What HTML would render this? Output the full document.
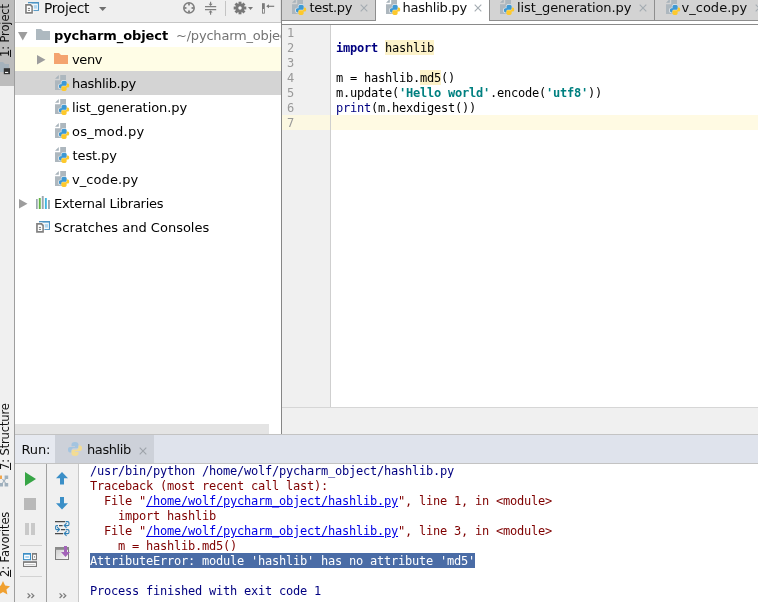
<!DOCTYPE html>
<html>
<head>
<meta charset="utf-8">
<title>pycharm_object - hashlib.py</title>
<style>
html,body{margin:0;padding:0;}
body{width:758px;height:602px;overflow:hidden;background:#fff;position:relative;font-family:"DejaVu Sans","Liberation Sans",sans-serif;font-size:13px;color:#000;}
#root{position:absolute;left:0;top:0;width:758px;height:602px;overflow:hidden;will-change:transform;}
.abs{position:absolute;}
svg{display:block;overflow:visible;}
.ui{font-family:"DejaVu Sans","Liberation Sans",sans-serif;font-size:13px;line-height:15px;white-space:nowrap;color:#0c0c0c;position:absolute;}
.mono{font-family:"DejaVu Sans Mono","Liberation Mono",monospace;font-size:12px;letter-spacing:-0.224px;white-space:pre;}
#stripe{left:0;top:0;width:14px;height:602px;background:#f0f0f0;border-right:1px solid #9e9e9e;}
#stripeSel{left:0;top:0;width:14px;height:86px;background:#bcbcbc;}
.vtext{position:absolute;transform-origin:0 0;transform:rotate(-90deg);white-space:nowrap;font-size:11.5px;line-height:13px;color:#111;letter-spacing:-0.13px;}
#projHead{left:15px;top:0;width:266px;height:22px;background:#efefef;border-bottom:1px solid #c6c6c6;}
#projTree{left:15px;top:23px;width:266px;height:411px;background:#fff;overflow:hidden;}
.row{position:absolute;left:0;width:266px;height:24px;}
.t{position:absolute;height:24px;line-height:26px;white-space:nowrap;font-size:13px;color:#000;}
#tabbar{left:282px;top:0;width:476px;height:20px;background:#d3d3d3;}
.tabsep{position:absolute;top:0;width:1px;height:20px;background:#8e8e8e;}
#gutter{left:282px;top:25px;width:48px;height:382px;background:#f0f0f0;border-right:1px solid #cfcfcf;}
.ln{position:absolute;left:287px;color:#999;height:14px;padding-top:1px;line-height:15px;}
.cl{position:absolute;left:336px;height:14px;padding-top:1px;line-height:15px;color:#000;}
.kw{color:#000080;font-weight:bold;}
.str{color:#008080;font-weight:bold;}
.bi{color:#000080;}
.hl{background:#fcf2c9;padding-top:1px;}
#runHead{left:15px;top:434px;width:743px;height:28px;background:#dfe3ec;border-top:1px solid #c3c3c3;border-bottom:1px solid #c3c3c3;}
.con{position:absolute;left:90px;height:14px;padding-top:1px;line-height:15px;}
.err{color:#7f0000;}
.out{color:#000080;}
.lnk{color:#0000e6;text-decoration:underline;}
</style>
</head>
<body>
<div id="root">

<div class="abs" id="stripe"></div><div class="abs" id="stripeSel"></div>
<div class="vtext" style="left:-1px;top:57px;"><u>1</u>: Project</div>
<div class="vtext" style="left:-1px;top:470px;"><u>7</u>: Structure</div>
<div class="vtext" style="left:-1px;top:577px;"><u>2</u>: Favorites</div>
<svg class="abs" style="left:0;top:61px" width="14" height="16" viewBox="0 0 14 16"><path d="M0 1 H3 L5 3 H9 V11 H0 Z" fill="#a5b2bc"/><rect x="3.8" y="7.2" width="6.2" height="6" fill="#333"/><rect x="5" y="10.9" width="3.2" height="1.1" fill="#f4f4f4"/></svg>
<svg class="abs" style="left:0;top:475px" width="9" height="12" viewBox="0 0 9 12"><rect x="0" y="0.5" width="2" height="3.5" fill="#f0a64e"/><rect x="4.6" y="0.5" width="3.6" height="3.5" fill="#9fb0bd"/><rect x="0" y="8" width="3" height="3.5" fill="#9fb0bd"/><rect x="4.6" y="8" width="3.6" height="3.5" fill="#9fb0bd"/><path d="M2.5 4 L5.5 8 M5.5 4 L2.5 8" stroke="#9fb0bd" stroke-width="1.2"/></svg>
<svg class="abs" style="left:-4px;top:581px" width="14" height="14" viewBox="0 0 14 14"><path d="M7 0 L9.1 4.6 L14 5.2 L10.4 8.6 L11.4 13.6 L7 11.1 L2.6 13.6 L3.6 8.6 L0 5.2 L4.9 4.6 Z" fill="#f0a030"/></svg>
<div class="abs" id="projHead"></div>
<div class="abs" style="left:15px;top:0;width:1px;height:22px;background:#fafafa"></div>
<svg class="abs" style="left:25px;top:2px" width="15" height="13" viewBox="0 0 15 13">
<rect x="3" y="0" width="11" height="8.9" fill="#4d94c4"/>
<rect x="3.6" y="1.6" width="9.3" height="6.4" fill="#f3f8fc"/>
<rect x="8.6" y="3.1" width="3.4" height="3.5" fill="#b0d7f1"/>
<path d="M-0.6 1.3 H6.2 L8.6 3.7 V12.5 H-0.6 Z" fill="#fff" opacity="0.75"/>
<path d="M0.1 2 H5.9 L7.9 4 V11.85 H0.1 Z" fill="#828282"/>
<path d="M1.8 3.8 H5.1 L6.3 5 V10.1 H1.8 Z" fill="#fff"/>
<rect x="2.9" y="5.9" width="2.1" height="0.9" fill="#6a6a6a"/><rect x="2.9" y="7.9" width="2.1" height="0.9" fill="#6a6a6a"/>
</svg>
<div class="ui" style="left:44px;top:1px;font-size:13.8px;letter-spacing:-0.3px">Project</div>
<svg class="abs" style="left:99px;top:7px" width="8" height="4" viewBox="0 0 8 4"><path d="M0 0 H7.4 L3.7 4 Z" fill="#6f6f6f"/></svg>
<svg class="abs" style="left:182px;top:1px" width="14" height="14" viewBox="0 0 14 14"><circle cx="7" cy="6.9" r="5.2" fill="none" stroke="#7c7c7c" stroke-width="1.5"/><path d="M5.5 2.2 H8.5 L7 5.2 Z M5.5 11.6 H8.5 L7 8.6 Z M2.3 5.4 V8.4 L5.3 6.9 Z M11.7 5.4 V8.4 L8.7 6.9 Z" fill="#7c7c7c"/></svg>
<svg class="abs" style="left:205px;top:1px" width="12" height="14" viewBox="0 0 12 14"><path d="M0 5.6 H11.2 M0 8.6 H11.2" stroke="#808080" stroke-width="1.05" fill="none"/><path d="M5.6 0.8 V3.5 M5.6 13.8 V11" stroke="#7c7c7c" stroke-width="1.1"/><path d="M3.6 2.8 H7.6 L5.6 5.1 Z M3.6 11.6 H7.6 L5.6 9.3 Z" fill="#7c7c7c"/></svg>
<div class="abs" style="left:225px;top:1px;width:1px;height:15px;background:#c4c4c4"></div>
<svg class="abs" style="left:233px;top:1px" width="14" height="14" viewBox="-7 -7 14 14"><rect x="-1.45" y="-6.3" width="2.9" height="3.2" fill="#787878" transform="rotate(0)"/><rect x="-1.45" y="-6.3" width="2.9" height="3.2" fill="#787878" transform="rotate(45)"/><rect x="-1.45" y="-6.3" width="2.9" height="3.2" fill="#787878" transform="rotate(90)"/><rect x="-1.45" y="-6.3" width="2.9" height="3.2" fill="#787878" transform="rotate(135)"/><rect x="-1.45" y="-6.3" width="2.9" height="3.2" fill="#787878" transform="rotate(180)"/><rect x="-1.45" y="-6.3" width="2.9" height="3.2" fill="#787878" transform="rotate(225)"/><rect x="-1.45" y="-6.3" width="2.9" height="3.2" fill="#787878" transform="rotate(270)"/><rect x="-1.45" y="-6.3" width="2.9" height="3.2" fill="#787878" transform="rotate(315)"/><circle r="4.5" fill="#787878"/><circle r="1.75" fill="#f6f6f6"/></svg>
<svg class="abs" style="left:248px;top:7px" width="5" height="3" viewBox="0 0 5 3"><path d="M0 0.1 H5 L2.5 2.9 Z" fill="#787878"/></svg>
<svg class="abs" style="left:262px;top:3px" width="13" height="11" viewBox="0 0 13 11"><rect x="0" y="0.2" width="2.8" height="10.4" fill="#7b7b7b"/><rect x="0.9" y="6" width="1" height="3.7" fill="#fafafa"/><path d="M5 3.3 H12.2" stroke="#7b7b7b" stroke-width="1.2"/><path d="M4.2 3.3 L7 1.3 V5.3 Z" fill="#7b7b7b"/></svg>
<div class="abs" id="projTree">
<div class="row" style="top:24px;background:#fffde6;"></div>
<div class="row" style="top:48px;background:#d4d4d4;"></div>
<div class="abs" style="left:0;top:401px;width:254px;height:10px;background:#e4e4e4"></div>
</div>
<div class="t" style="left:54px;top:23px;font-weight:bold;letter-spacing:-0.1px">pycharm_object</div>
<div class="t" style="left:72px;top:47px;letter-spacing:-0.37px">venv</div>
<div class="t" style="left:72px;top:71px;letter-spacing:-0.3px">hashlib.py</div>
<div class="t" style="left:72px;top:95px;letter-spacing:-0.07px">list_generation.py</div>
<div class="t" style="left:72px;top:119px;letter-spacing:0.24px">os_mod.py</div>
<div class="t" style="left:72.5px;top:143px;letter-spacing:-0.1px">test.py</div>
<div class="t" style="left:72px;top:167px;letter-spacing:0.08px">v_code.py</div>
<div class="t" style="left:54px;top:191px;letter-spacing:-0.28px">External Libraries</div>
<div class="t" style="left:54px;top:215px;letter-spacing:0.01px">Scratches and Consoles</div>
<div class="abs" style="left:176px;top:23px;width:105px;height:24px;overflow:hidden"><div class="t" style="left:0;top:0;color:#747474;letter-spacing:-0.2px">~/pycharm_object</div></div>
<svg class="abs" style="left:18px;top:32px" width="10" height="9" viewBox="0 0 10 9"><path d="M0 0 H9.5 L4.75 8.5 Z" fill="#9d9d9d"/></svg>
<svg class="abs" style="left:36px;top:29px" width="14" height="11" viewBox="0 0 14 11"><path d="M0 0 H5 L7 2 H14 V11 H0 Z" fill="#aeb9c0"/></svg>
<svg class="abs" style="left:37px;top:55px" width="9" height="10" viewBox="0 0 9 10"><path d="M0 0 L8.5 4.75 L0 9.5 Z" fill="#9d9d9d"/></svg>
<svg class="abs" style="left:54px;top:53px" width="14" height="11" viewBox="0 0 14 11"><path d="M0 0 H5 L7 2 H14 V11 H0 Z" fill="#f4a46f"/></svg>
<svg class="abs" style="left:55px;top:75px" width="16" height="17" viewBox="0 0 16 17">
<path d="M5.2 0 H11 V14.9 H0 V5.2 H5.2 Z" fill="#adb7be"/>
<path d="M0 3.8 L3.8 0 V3.8 Z" fill="#a7b2ba"/>
<g transform="translate(3.9,5.8) scale(1.03)">
<path d="M5 -0.7 C2.8 -0.7 1.9 0.2 1.9 1.6 V2.9 H1.2 C-0.3 2.9 -0.7 4.2 -0.7 5.5 C-0.7 7 0 8.1 1.5 8.1 H3 V6 H7.5 V1.6 C7.5 0.2 7 -0.7 5 -0.7 Z" fill="#fff" opacity="0.75"/>
<path d="M5 0 C3.2 0 2.5 .7 2.5 1.8 V3.4 H1.4 C.4 3.4 0 4.3 0 5.4 C0 6.6 .5 7.4 1.4 7.4 H2.6 V6.2 C2.6 5.3 3.2 4.8 4 4.8 H6.4 C7.1 4.8 7.6 4.3 7.6 3.6 V1.8 C7.6 .7 6.8 0 5 0 Z" fill="#3d98d3"/>
<path d="M5 10 C6.8 10 7.5 9.3 7.5 8.2 V6.6 H8.6 C9.6 6.6 10 5.7 10 4.6 C10 3.4 9.5 2.6 8.6 2.6 H7.6 V3.8 C7.6 4.7 7 5.3 6.2 5.3 H3.6 C2.9 5.3 2.4 5.7 2.4 6.4 V8.2 C2.4 9.3 3.2 10 5 10 Z" fill="#fdc92c"/>
</g></svg>
<svg class="abs" style="left:55px;top:99px" width="16" height="17" viewBox="0 0 16 17">
<path d="M5.2 0 H11 V14.9 H0 V5.2 H5.2 Z" fill="#adb7be"/>
<path d="M0 3.8 L3.8 0 V3.8 Z" fill="#a7b2ba"/>
<g transform="translate(3.9,5.8) scale(1.03)">
<path d="M5 -0.7 C2.8 -0.7 1.9 0.2 1.9 1.6 V2.9 H1.2 C-0.3 2.9 -0.7 4.2 -0.7 5.5 C-0.7 7 0 8.1 1.5 8.1 H3 V6 H7.5 V1.6 C7.5 0.2 7 -0.7 5 -0.7 Z" fill="#fff" opacity="0.75"/>
<path d="M5 0 C3.2 0 2.5 .7 2.5 1.8 V3.4 H1.4 C.4 3.4 0 4.3 0 5.4 C0 6.6 .5 7.4 1.4 7.4 H2.6 V6.2 C2.6 5.3 3.2 4.8 4 4.8 H6.4 C7.1 4.8 7.6 4.3 7.6 3.6 V1.8 C7.6 .7 6.8 0 5 0 Z" fill="#3d98d3"/>
<path d="M5 10 C6.8 10 7.5 9.3 7.5 8.2 V6.6 H8.6 C9.6 6.6 10 5.7 10 4.6 C10 3.4 9.5 2.6 8.6 2.6 H7.6 V3.8 C7.6 4.7 7 5.3 6.2 5.3 H3.6 C2.9 5.3 2.4 5.7 2.4 6.4 V8.2 C2.4 9.3 3.2 10 5 10 Z" fill="#fdc92c"/>
</g></svg>
<svg class="abs" style="left:55px;top:123px" width="16" height="17" viewBox="0 0 16 17">
<path d="M5.2 0 H11 V14.9 H0 V5.2 H5.2 Z" fill="#adb7be"/>
<path d="M0 3.8 L3.8 0 V3.8 Z" fill="#a7b2ba"/>
<g transform="translate(3.9,5.8) scale(1.03)">
<path d="M5 -0.7 C2.8 -0.7 1.9 0.2 1.9 1.6 V2.9 H1.2 C-0.3 2.9 -0.7 4.2 -0.7 5.5 C-0.7 7 0 8.1 1.5 8.1 H3 V6 H7.5 V1.6 C7.5 0.2 7 -0.7 5 -0.7 Z" fill="#fff" opacity="0.75"/>
<path d="M5 0 C3.2 0 2.5 .7 2.5 1.8 V3.4 H1.4 C.4 3.4 0 4.3 0 5.4 C0 6.6 .5 7.4 1.4 7.4 H2.6 V6.2 C2.6 5.3 3.2 4.8 4 4.8 H6.4 C7.1 4.8 7.6 4.3 7.6 3.6 V1.8 C7.6 .7 6.8 0 5 0 Z" fill="#3d98d3"/>
<path d="M5 10 C6.8 10 7.5 9.3 7.5 8.2 V6.6 H8.6 C9.6 6.6 10 5.7 10 4.6 C10 3.4 9.5 2.6 8.6 2.6 H7.6 V3.8 C7.6 4.7 7 5.3 6.2 5.3 H3.6 C2.9 5.3 2.4 5.7 2.4 6.4 V8.2 C2.4 9.3 3.2 10 5 10 Z" fill="#fdc92c"/>
</g></svg>
<svg class="abs" style="left:55px;top:147px" width="16" height="17" viewBox="0 0 16 17">
<path d="M5.2 0 H11 V14.9 H0 V5.2 H5.2 Z" fill="#adb7be"/>
<path d="M0 3.8 L3.8 0 V3.8 Z" fill="#a7b2ba"/>
<g transform="translate(3.9,5.8) scale(1.03)">
<path d="M5 -0.7 C2.8 -0.7 1.9 0.2 1.9 1.6 V2.9 H1.2 C-0.3 2.9 -0.7 4.2 -0.7 5.5 C-0.7 7 0 8.1 1.5 8.1 H3 V6 H7.5 V1.6 C7.5 0.2 7 -0.7 5 -0.7 Z" fill="#fff" opacity="0.75"/>
<path d="M5 0 C3.2 0 2.5 .7 2.5 1.8 V3.4 H1.4 C.4 3.4 0 4.3 0 5.4 C0 6.6 .5 7.4 1.4 7.4 H2.6 V6.2 C2.6 5.3 3.2 4.8 4 4.8 H6.4 C7.1 4.8 7.6 4.3 7.6 3.6 V1.8 C7.6 .7 6.8 0 5 0 Z" fill="#3d98d3"/>
<path d="M5 10 C6.8 10 7.5 9.3 7.5 8.2 V6.6 H8.6 C9.6 6.6 10 5.7 10 4.6 C10 3.4 9.5 2.6 8.6 2.6 H7.6 V3.8 C7.6 4.7 7 5.3 6.2 5.3 H3.6 C2.9 5.3 2.4 5.7 2.4 6.4 V8.2 C2.4 9.3 3.2 10 5 10 Z" fill="#fdc92c"/>
</g></svg>
<svg class="abs" style="left:55px;top:171px" width="16" height="17" viewBox="0 0 16 17">
<path d="M5.2 0 H11 V14.9 H0 V5.2 H5.2 Z" fill="#adb7be"/>
<path d="M0 3.8 L3.8 0 V3.8 Z" fill="#a7b2ba"/>
<g transform="translate(3.9,5.8) scale(1.03)">
<path d="M5 -0.7 C2.8 -0.7 1.9 0.2 1.9 1.6 V2.9 H1.2 C-0.3 2.9 -0.7 4.2 -0.7 5.5 C-0.7 7 0 8.1 1.5 8.1 H3 V6 H7.5 V1.6 C7.5 0.2 7 -0.7 5 -0.7 Z" fill="#fff" opacity="0.75"/>
<path d="M5 0 C3.2 0 2.5 .7 2.5 1.8 V3.4 H1.4 C.4 3.4 0 4.3 0 5.4 C0 6.6 .5 7.4 1.4 7.4 H2.6 V6.2 C2.6 5.3 3.2 4.8 4 4.8 H6.4 C7.1 4.8 7.6 4.3 7.6 3.6 V1.8 C7.6 .7 6.8 0 5 0 Z" fill="#3d98d3"/>
<path d="M5 10 C6.8 10 7.5 9.3 7.5 8.2 V6.6 H8.6 C9.6 6.6 10 5.7 10 4.6 C10 3.4 9.5 2.6 8.6 2.6 H7.6 V3.8 C7.6 4.7 7 5.3 6.2 5.3 H3.6 C2.9 5.3 2.4 5.7 2.4 6.4 V8.2 C2.4 9.3 3.2 10 5 10 Z" fill="#fdc92c"/>
</g></svg>
<svg class="abs" style="left:19px;top:199px" width="9" height="10" viewBox="0 0 9 10"><path d="M0 0 L8.5 4.75 L0 9.5 Z" fill="#9d9d9d"/></svg>
<svg class="abs" style="left:36px;top:196px" width="15" height="13" viewBox="0 0 15 13"><rect x="0" y="3" width="1.7" height="10" fill="#9aa7b0"/><rect x="2.8" y="2" width="1.9" height="11" fill="#62b543"/><rect x="5.8" y="0" width="1.9" height="13" fill="#9aa7b0"/><rect x="8.9" y="2" width="1.9" height="11" fill="#40b6e0"/><rect x="12" y="4" width="1.9" height="9" fill="#9aa7b0"/></svg>
<svg class="abs" style="left:36px;top:221px" width="15" height="13" viewBox="0 0 15 13">
<rect x="3" y="0" width="11" height="8.9" fill="#4d94c4"/>
<rect x="3.6" y="1.6" width="9.3" height="6.4" fill="#f3f8fc"/>
<rect x="8.6" y="3.1" width="3.4" height="3.5" fill="#b0d7f1"/>
<path d="M-0.6 1.3 H6.2 L8.6 3.7 V12.5 H-0.6 Z" fill="#fff" opacity="0.75"/>
<path d="M0.1 2 H5.9 L7.9 4 V11.85 H0.1 Z" fill="#828282"/>
<path d="M1.8 3.8 H5.1 L6.3 5 V10.1 H1.8 Z" fill="#fff"/>
<rect x="2.9" y="5.9" width="2.1" height="0.9" fill="#6a6a6a"/><rect x="2.9" y="7.9" width="2.1" height="0.9" fill="#6a6a6a"/>
</svg>
<div class="abs" style="left:280px;top:0;width:1px;height:22px;background:#e2e2e2"></div>
<div class="abs" style="left:281px;top:0;width:1px;height:434px;background:#868686"></div>
<div class="abs" id="tabbar"></div>
<div class="abs" style="left:376px;top:0;width:113px;height:21px;background:#fff"></div>
<div class="abs" style="left:282px;top:21px;width:476px;height:3px;background:#fff"></div>
<div class="abs" style="left:282px;top:20px;width:94px;height:1px;background:#8e8e8e"></div>
<div class="abs" style="left:489px;top:20px;width:269px;height:1px;background:#8e8e8e"></div>
<div class="abs" style="left:282px;top:24px;width:476px;height:1px;background:#8a8a8a"></div>
<div class="tabsep" style="left:375px"></div>
<div class="tabsep" style="left:489px"></div>
<div class="tabsep" style="left:654px"></div>
<svg class="abs" style="left:292px;top:-1px" width="16" height="17" viewBox="0 0 16 17">
<path d="M5.2 0 H11 V14.9 H0 V5.2 H5.2 Z" fill="#adb7be"/>
<path d="M0 3.8 L3.8 0 V3.8 Z" fill="#a7b2ba"/>
<g transform="translate(3.9,5.8) scale(1.03)">
<path d="M5 -0.7 C2.8 -0.7 1.9 0.2 1.9 1.6 V2.9 H1.2 C-0.3 2.9 -0.7 4.2 -0.7 5.5 C-0.7 7 0 8.1 1.5 8.1 H3 V6 H7.5 V1.6 C7.5 0.2 7 -0.7 5 -0.7 Z" fill="#fff" opacity="0.75"/>
<path d="M5 0 C3.2 0 2.5 .7 2.5 1.8 V3.4 H1.4 C.4 3.4 0 4.3 0 5.4 C0 6.6 .5 7.4 1.4 7.4 H2.6 V6.2 C2.6 5.3 3.2 4.8 4 4.8 H6.4 C7.1 4.8 7.6 4.3 7.6 3.6 V1.8 C7.6 .7 6.8 0 5 0 Z" fill="#3d98d3"/>
<path d="M5 10 C6.8 10 7.5 9.3 7.5 8.2 V6.6 H8.6 C9.6 6.6 10 5.7 10 4.6 C10 3.4 9.5 2.6 8.6 2.6 H7.6 V3.8 C7.6 4.7 7 5.3 6.2 5.3 H3.6 C2.9 5.3 2.4 5.7 2.4 6.4 V8.2 C2.4 9.3 3.2 10 5 10 Z" fill="#fdc92c"/>
</g></svg>
<div class="ui" style="left:309.5px;top:0;letter-spacing:-0.35px">test.py</div>
<svg class="abs" style="left:359.6px;top:3.6px" width="8" height="8" viewBox="0 0 8 8"><path d="M0.7 0.7 L7.3 7.3 M7.3 0.7 L0.7 7.3" stroke="#a4acb2" stroke-width="1.1" fill="none"/></svg>
<svg class="abs" style="left:386px;top:-1px" width="16" height="17" viewBox="0 0 16 17">
<path d="M5.2 0 H11 V14.9 H0 V5.2 H5.2 Z" fill="#adb7be"/>
<path d="M0 3.8 L3.8 0 V3.8 Z" fill="#a7b2ba"/>
<g transform="translate(3.9,5.8) scale(1.03)">
<path d="M5 -0.7 C2.8 -0.7 1.9 0.2 1.9 1.6 V2.9 H1.2 C-0.3 2.9 -0.7 4.2 -0.7 5.5 C-0.7 7 0 8.1 1.5 8.1 H3 V6 H7.5 V1.6 C7.5 0.2 7 -0.7 5 -0.7 Z" fill="#fff" opacity="0.75"/>
<path d="M5 0 C3.2 0 2.5 .7 2.5 1.8 V3.4 H1.4 C.4 3.4 0 4.3 0 5.4 C0 6.6 .5 7.4 1.4 7.4 H2.6 V6.2 C2.6 5.3 3.2 4.8 4 4.8 H6.4 C7.1 4.8 7.6 4.3 7.6 3.6 V1.8 C7.6 .7 6.8 0 5 0 Z" fill="#3d98d3"/>
<path d="M5 10 C6.8 10 7.5 9.3 7.5 8.2 V6.6 H8.6 C9.6 6.6 10 5.7 10 4.6 C10 3.4 9.5 2.6 8.6 2.6 H7.6 V3.8 C7.6 4.7 7 5.3 6.2 5.3 H3.6 C2.9 5.3 2.4 5.7 2.4 6.4 V8.2 C2.4 9.3 3.2 10 5 10 Z" fill="#fdc92c"/>
</g></svg>
<div class="ui" style="left:402.5px;top:0;letter-spacing:-0.22px">hashlib.py</div>
<svg class="abs" style="left:473.6px;top:3.6px" width="8" height="8" viewBox="0 0 8 8"><path d="M0.7 0.7 L7.3 7.3 M7.3 0.7 L0.7 7.3" stroke="#a4acb2" stroke-width="1.1" fill="none"/></svg>
<svg class="abs" style="left:500px;top:-1px" width="16" height="17" viewBox="0 0 16 17">
<path d="M5.2 0 H11 V14.9 H0 V5.2 H5.2 Z" fill="#adb7be"/>
<path d="M0 3.8 L3.8 0 V3.8 Z" fill="#a7b2ba"/>
<g transform="translate(3.9,5.8) scale(1.03)">
<path d="M5 -0.7 C2.8 -0.7 1.9 0.2 1.9 1.6 V2.9 H1.2 C-0.3 2.9 -0.7 4.2 -0.7 5.5 C-0.7 7 0 8.1 1.5 8.1 H3 V6 H7.5 V1.6 C7.5 0.2 7 -0.7 5 -0.7 Z" fill="#fff" opacity="0.75"/>
<path d="M5 0 C3.2 0 2.5 .7 2.5 1.8 V3.4 H1.4 C.4 3.4 0 4.3 0 5.4 C0 6.6 .5 7.4 1.4 7.4 H2.6 V6.2 C2.6 5.3 3.2 4.8 4 4.8 H6.4 C7.1 4.8 7.6 4.3 7.6 3.6 V1.8 C7.6 .7 6.8 0 5 0 Z" fill="#3d98d3"/>
<path d="M5 10 C6.8 10 7.5 9.3 7.5 8.2 V6.6 H8.6 C9.6 6.6 10 5.7 10 4.6 C10 3.4 9.5 2.6 8.6 2.6 H7.6 V3.8 C7.6 4.7 7 5.3 6.2 5.3 H3.6 C2.9 5.3 2.4 5.7 2.4 6.4 V8.2 C2.4 9.3 3.2 10 5 10 Z" fill="#fdc92c"/>
</g></svg>
<div class="ui" style="left:517px;top:0;letter-spacing:-0.12px">list_generation.py</div>
<svg class="abs" style="left:638.6px;top:3.6px" width="8" height="8" viewBox="0 0 8 8"><path d="M0.7 0.7 L7.3 7.3 M7.3 0.7 L0.7 7.3" stroke="#a4acb2" stroke-width="1.1" fill="none"/></svg>
<svg class="abs" style="left:666px;top:-1px" width="16" height="17" viewBox="0 0 16 17">
<path d="M5.2 0 H11 V14.9 H0 V5.2 H5.2 Z" fill="#adb7be"/>
<path d="M0 3.8 L3.8 0 V3.8 Z" fill="#a7b2ba"/>
<g transform="translate(3.9,5.8) scale(1.03)">
<path d="M5 -0.7 C2.8 -0.7 1.9 0.2 1.9 1.6 V2.9 H1.2 C-0.3 2.9 -0.7 4.2 -0.7 5.5 C-0.7 7 0 8.1 1.5 8.1 H3 V6 H7.5 V1.6 C7.5 0.2 7 -0.7 5 -0.7 Z" fill="#fff" opacity="0.75"/>
<path d="M5 0 C3.2 0 2.5 .7 2.5 1.8 V3.4 H1.4 C.4 3.4 0 4.3 0 5.4 C0 6.6 .5 7.4 1.4 7.4 H2.6 V6.2 C2.6 5.3 3.2 4.8 4 4.8 H6.4 C7.1 4.8 7.6 4.3 7.6 3.6 V1.8 C7.6 .7 6.8 0 5 0 Z" fill="#3d98d3"/>
<path d="M5 10 C6.8 10 7.5 9.3 7.5 8.2 V6.6 H8.6 C9.6 6.6 10 5.7 10 4.6 C10 3.4 9.5 2.6 8.6 2.6 H7.6 V3.8 C7.6 4.7 7 5.3 6.2 5.3 H3.6 C2.9 5.3 2.4 5.7 2.4 6.4 V8.2 C2.4 9.3 3.2 10 5 10 Z" fill="#fdc92c"/>
</g></svg>
<div class="ui" style="left:681.5px;top:0;letter-spacing:0.02px">v_code.py</div>
<svg class="abs" style="left:754.6px;top:3.6px" width="8" height="8" viewBox="0 0 8 8"><path d="M0.7 0.7 L7.3 7.3 M7.3 0.7 L0.7 7.3" stroke="#a4acb2" stroke-width="1.1" fill="none"/></svg>
<div class="abs" id="gutter"></div>
<div class="abs" style="left:282px;top:407px;width:476px;height:27px;background:#f0f0f0;border-top:1px solid #d6d6d6;box-sizing:border-box"></div>
<div class="abs" style="left:282px;top:115px;width:48px;height:15px;background:#fcf8e2;"></div>
<div class="abs" style="left:331px;top:115px;width:427px;height:15px;background:#fffae3;"></div>
<div class="ln mono" style="top:25px;">1</div>
<div class="ln mono" style="top:40px;">2</div>
<div class="ln mono" style="top:55px;">3</div>
<div class="ln mono" style="top:70px;">4</div>
<div class="ln mono" style="top:85px;">5</div>
<div class="ln mono" style="top:100px;">6</div>
<div class="ln mono" style="top:115px;">7</div>
<div class="cl mono" style="top:40px;"><span class="kw">import</span> <span class="hl">hashlib</span></div>
<div class="cl mono" style="top:70px;">m = hashlib.<span class="hl">md5</span>()</div>
<div class="cl mono" style="top:85px;">m.update(<span class="str">'Hello world'</span>.encode(<span class="str">'utf8'</span>))</div>
<div class="cl mono" style="top:100px;"><span class="bi">print</span>(m.hexdigest())</div>
<div class="abs" id="runHead"></div>
<div class="abs" style="left:15px;top:435px;width:40px;height:28px;background:#e6e9f0"></div>
<div class="abs" style="left:55px;top:435px;width:99px;height:28px;background:#cdd1d9"></div>
<div class="ui" style="left:21.5px;top:442px;letter-spacing:-0.12px">Run:</div>
<div class="ui" style="left:87px;top:442px;letter-spacing:-0.4px">hashlib</div>
<svg class="abs" style="left:68px;top:442px" width="14" height="14" viewBox="0 0 10 10"><path d="M5 0 C3 0 2.5 .8 2.5 2 V3 H5 V3.5 H1.5 C.3 3.5 0 4.5 0 5.5 C0 6.8 .5 7.5 1.5 7.5 H2.5 V6 C2.5 5 3.3 4.5 4 4.5 H6.3 C7 4.5 7.5 4 7.5 3.2 V2 C7.5 .8 6.8 0 5 0 Z" fill="#a3c4e0"/><path d="M5 10 C7 10 7.5 9.2 7.5 8 V7 H5 V6.5 H8.5 C9.7 6.5 10 5.5 10 4.5 C10 3.2 9.5 2.5 8.5 2.5 H7.5 V4 C7.5 5 6.7 5.5 6 5.5 H3.7 C3 5.5 2.5 6 2.5 6.8 V8 C2.5 9.2 3.2 10 5 10 Z" fill="#f3dc93"/></svg>
<svg class="abs" style="left:138.8px;top:446.6px" width="8" height="8" viewBox="0 0 8 8"><path d="M0.7 0.7 L7.3 7.3 M7.3 0.7 L0.7 7.3" stroke="#9ea3a9" stroke-width="1.1" fill="none"/></svg>
<div class="abs" style="left:15px;top:464px;width:31px;height:138px;background:#f0f0f0;border-right:1px solid #a0a0a0"></div>
<div class="abs" style="left:47px;top:464px;width:31px;height:138px;background:#f0f0f0;border-right:1px solid #c8c8c8"></div>
<svg class="abs" style="left:25px;top:472px" width="12" height="14" viewBox="0 0 12 14"><path d="M0 0 L11 7 L0 14 Z" fill="#37a546"/></svg>
<div class="abs" style="left:24px;top:498px;width:12px;height:12px;background:#b9b9b9"></div>
<div class="abs" style="left:25px;top:523px;width:4px;height:12px;background:#c9c9c9"></div>
<div class="abs" style="left:31px;top:523px;width:4px;height:12px;background:#c9c9c9"></div>
<div class="abs" style="left:20px;top:545px;width:22px;height:1px;background:#d2d2d2"></div>
<div class="abs" style="left:20px;top:576px;width:22px;height:1px;background:#d2d2d2"></div>
<svg class="abs" style="left:23px;top:553px" width="14" height="14" viewBox="0 0 14 14"><rect x="0" y="0" width="8" height="7.2" fill="#3b8ec6"/><rect x="1.1" y="1.7" width="5.8" height="4.4" fill="#fff"/><rect x="2.3" y="3" width="3.6" height="1.9" fill="#a8d3ef"/><rect x="9" y="0" width="5" height="7.2" fill="#7b7b7b"/><rect x="10.1" y="1.7" width="2.8" height="4.4" fill="#fff"/><rect x="11.1" y="3" width="0.9" height="1.8" fill="#9a9a9a"/><rect x="0" y="8.2" width="14" height="5.8" fill="#7b7b7b"/><rect x="1.1" y="9.9" width="11.8" height="3" fill="#fff"/><rect x="2.2" y="11" width="9.6" height="0.9" fill="#c9c9c9"/></svg>
<svg class="abs" style="left:26.5px;top:593px" width="8" height="6" viewBox="0 0 8 6"><path d="M0.6 0.4 L3 2.7 L0.6 5 M4.4 0.4 L6.8 2.7 L4.4 5" stroke="#7d7d7d" stroke-width="1.25" fill="none"/></svg>
<svg class="abs" style="left:58.8px;top:593px" width="8" height="6" viewBox="0 0 8 6"><path d="M0.6 0.4 L3 2.7 L0.6 5 M4.4 0.4 L6.8 2.7 L4.4 5" stroke="#7d7d7d" stroke-width="1.25" fill="none"/></svg>
<svg class="abs" style="left:56px;top:472px" width="12" height="13" viewBox="0 0 12 13"><path d="M6 0 L12 6.2 H8 V12.5 H4 V6.2 H0 Z" fill="#3b8fc7"/></svg>
<svg class="abs" style="left:56px;top:497px" width="12" height="13" viewBox="0 0 12 13"><path d="M6 12.5 L12 6.3 H8 V0 H4 V6.3 H0 Z" fill="#3b8fc7"/></svg>
<svg class="abs" style="left:55px;top:521px" width="15" height="14" viewBox="0 0 15 14"><path d="M0 0.6 H10 M4 4.6 H7.6 M6 8.6 H10 M0 12.6 H8" stroke="#4a4a4a" stroke-width="1.1" fill="none"/><path d="M10.6 0.6 H12.6 Q14 0.6 14 2 V3.2 Q14 4.6 12.6 4.6 H10 M11.6 2.2 L9.2 4.6 L11.6 7 M3 4.6 H1.8 Q0.6 4.6 0.6 5.8 V7.4 Q0.6 8.6 1.8 8.6 H3.8 M2.2 6.2 L4.6 8.6 L2.2 11 M10.6 8.6 H12.6 Q14 8.6 14 10 V11.2 Q14 12.6 12.6 12.6 H10 M11.6 10.2 L9.2 12.6 L11.6 15" stroke="#2f7fb5" stroke-width="1.05" fill="none"/></svg>
<svg class="abs" style="left:55px;top:546px" width="16" height="15" viewBox="0 0 16 15"><defs><linearGradient id="sg" x1="0" y1="0" x2="1" y2="1"><stop offset="0" stop-color="#c9c9c9"/><stop offset="1" stop-color="#fdfdfd"/></linearGradient></defs><rect x="0.5" y="1.5" width="13" height="12" fill="url(#sg)" stroke="#7d7d7d"/><rect x="0" y="1" width="14" height="2.8" fill="#8a8a8a"/><path d="M9 0 H12 V6 H15 L10.5 11 L6 6 H9 Z" fill="#a364b9"/></svg>
<div class="con mono out" style="top:463px;">/usr/bin/python /home/wolf/pycharm_object/hashlib.py</div>
<div class="con mono err" style="top:478px;">Traceback (most recent call last):</div>
<div class="con mono err" style="top:493px;">  File "<span class="lnk">/home/wolf/pycharm_object/hashlib.py</span>", line 1, in &lt;module&gt;</div>
<div class="con mono err" style="top:508px;">    import hashlib</div>
<div class="con mono err" style="top:523px;">  File "<span class="lnk">/home/wolf/pycharm_object/hashlib.py</span>", line 3, in &lt;module&gt;</div>
<div class="con mono err" style="top:538px;">    m = hashlib.md5()</div>
<div class="con mono" style="top:553px;background:#4a6ca6;color:#fff;">AttributeError: module 'hashlib' has no attribute 'md5'</div>
<div class="con mono out" style="top:583px;">Process finished with exit code 1</div>
</div>
</body>
</html>
